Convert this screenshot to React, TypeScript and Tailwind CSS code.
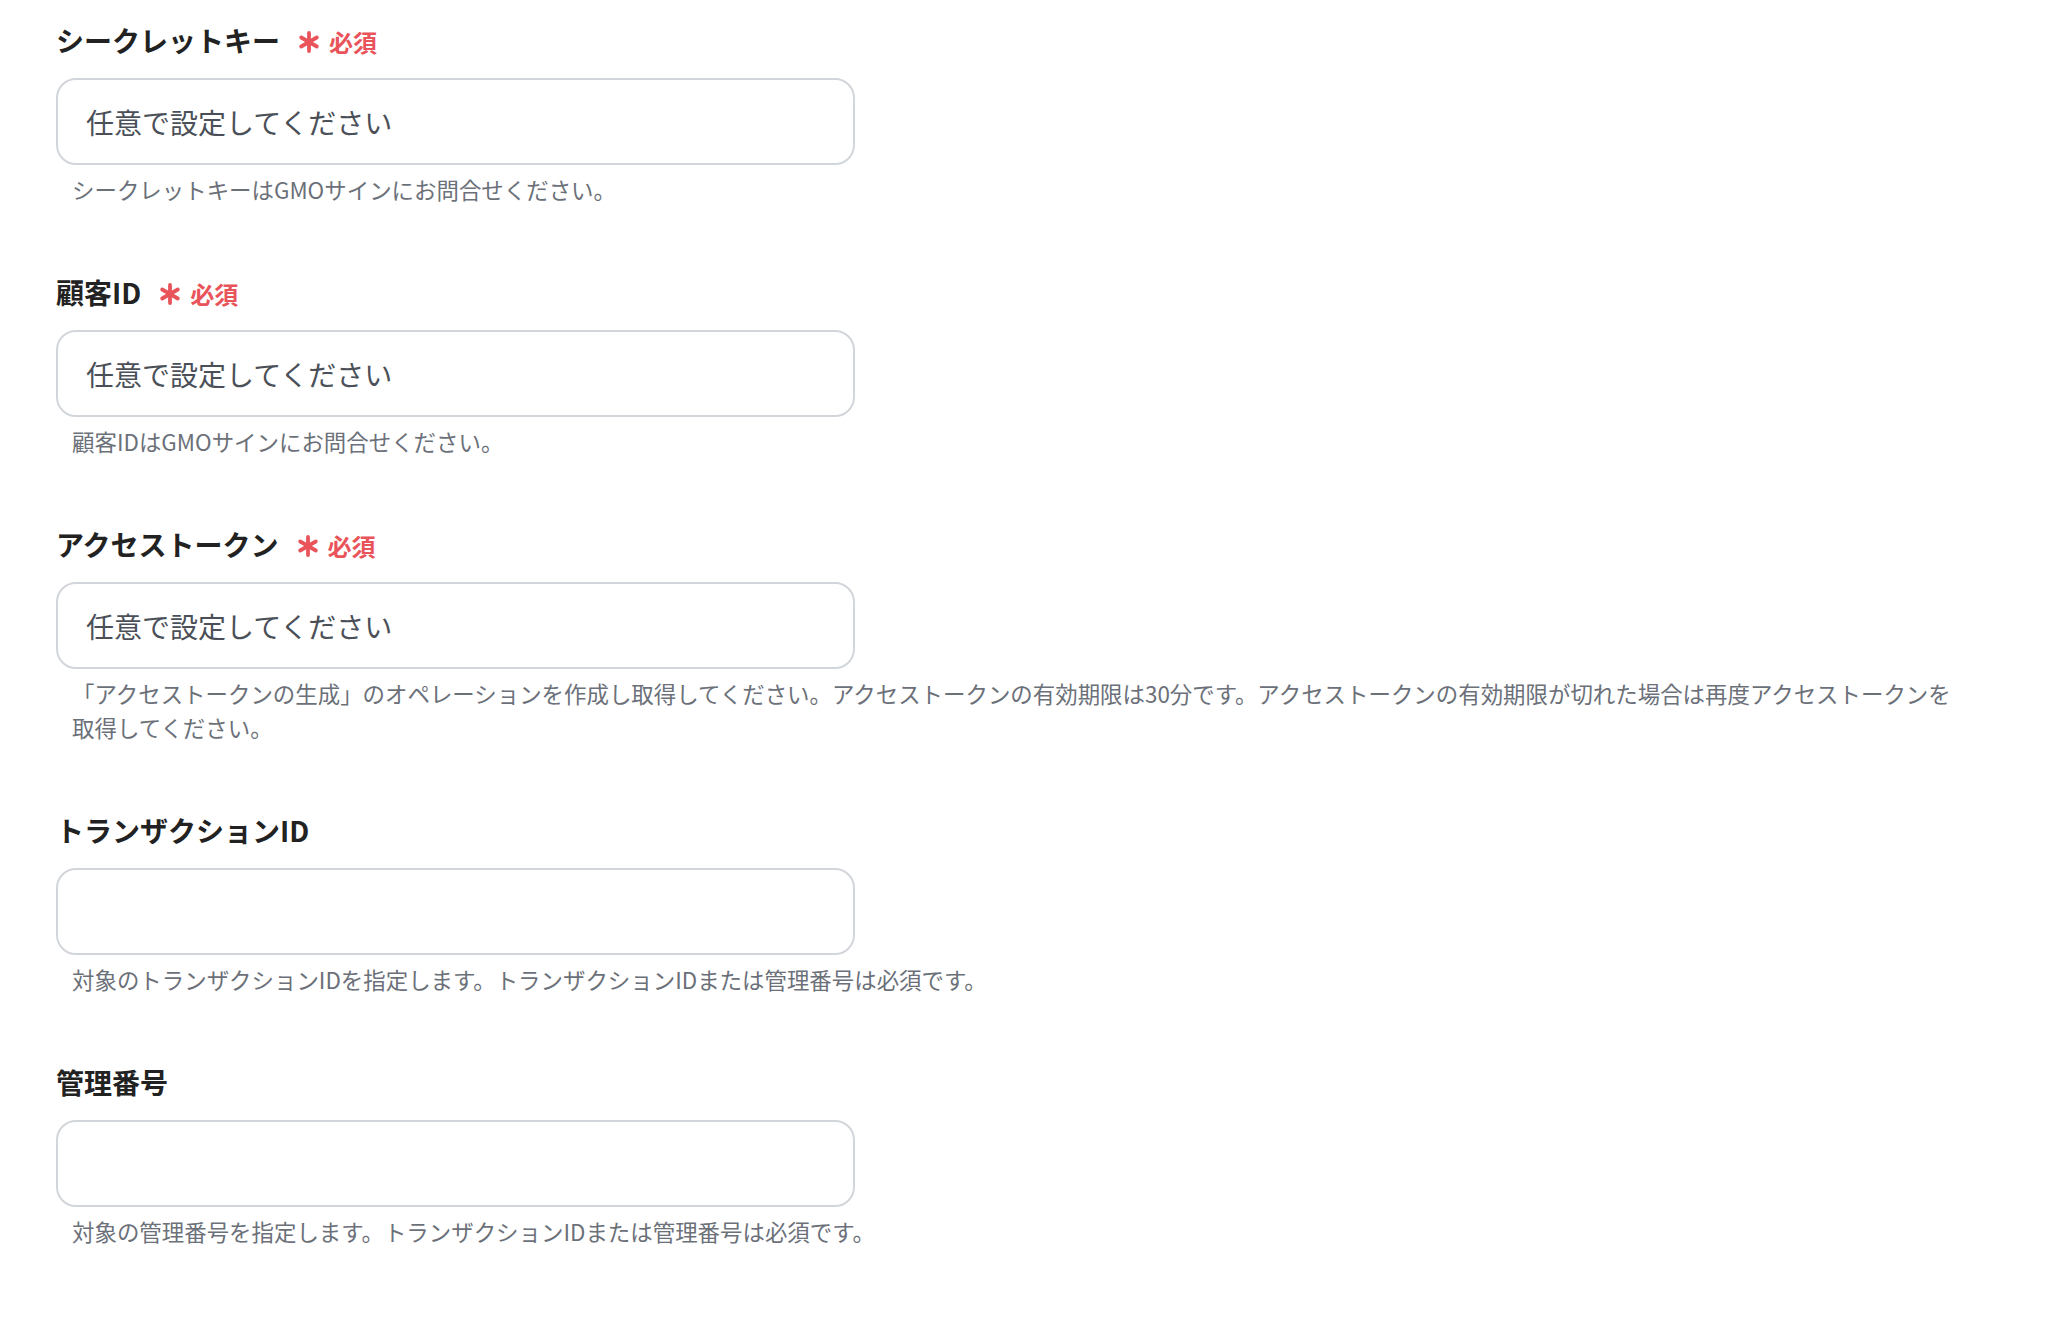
import React from 'react';

type Field = {
  label: string;
  required?: boolean;
  placeholder?: string;
  help: string;
};

const fields: Field[] = [
  {
    label: 'シークレットキー',
    required: true,
    placeholder: '任意で設定してください',
    help: 'シークレットキーはGMOサインにお問合せください。',
  },
  {
    label: '顧客ID',
    required: true,
    placeholder: '任意で設定してください',
    help: '顧客IDはGMOサインにお問合せください。',
  },
  {
    label: 'アクセストークン',
    required: true,
    placeholder: '任意で設定してください',
    help: '「アクセストークンの生成」のオペレーションを作成し取得してください。アクセストークンの有効期限は30分です。アクセストークンの有効期限が切れた場合は再度アクセストークンを取得してください。',
  },
  {
    label: 'トランザクションID',
    help: '対象のトランザクションIDを指定します。トランザクションIDまたは管理番号は必須です。',
  },
  {
    label: '管理番号',
    help: '対象の管理番号を指定します。トランザクションIDまたは管理番号は必須です。',
  },
];

function RequiredMark() {
  return (
    <span className="flex items-center gap-[9px] ml-[18px] text-[#e9535a]">
      <svg width="22" height="22" viewBox="0 0 22 22" className="mt-[3px]">
        <g stroke="currentColor" strokeWidth="3.8" strokeLinecap="round">
          <line x1="11" y1="2" x2="11" y2="20" />
          <line x1="3.2" y1="6.5" x2="18.8" y2="15.5" />
          <line x1="3.2" y1="15.5" x2="18.8" y2="6.5" />
        </g>
      </svg>
      <span className="text-[24px] font-bold leading-[40px] mt-[3px]">必須</span>
    </span>
  );
}

export default function App() {
  return (
    <div
      className="min-h-screen bg-white pt-[20px] pl-[56px]"
      style={{ fontFamily: '"Noto Sans CJK JP", "Noto Sans", sans-serif' }}
    >
      <div className="w-[1904px] flex flex-col gap-[65.5px]">
        {fields.map(f => (
          <div key={f.label} className="flex flex-col">
            <div className="flex items-center h-[40px]">
              <span className="text-[28px] font-bold leading-[40px] text-[#222222]">{f.label}</span>
              {f.required && <RequiredMark />}
            </div>
            <input
              type="text"
              placeholder={f.placeholder}
              className="mt-[18px] w-[799px] h-[87px] rounded-[20px] border-2 border-[#d2d6db] bg-white px-[28px] text-[28px] text-gray-800 placeholder:text-[#4b5058] outline-none"
            />
            <p className="mt-[8px] pl-4 text-[22.45px] leading-[33.5px] text-[#6b7079]">{f.help}</p>
          </div>
        ))}
      </div>
    </div>
  );
}
